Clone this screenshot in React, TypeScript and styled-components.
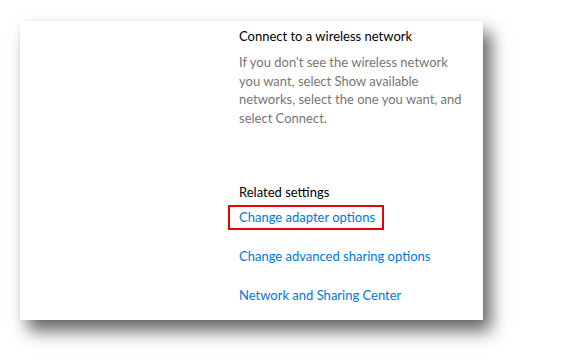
import styled, { createGlobalStyle } from "styled-components";

const GlobalStyle = createGlobalStyle`
  html, body {
    margin: 0;
    padding: 0;
    background: #ffffff;
  }
  body {
    font-family: "Lato", "Noto Sans", sans-serif;
  }
`;

const links = [
  { label: "Change adapter options", highlighted: true },
  { label: "Change advanced sharing options", highlighted: false },
  { label: "Network and Sharing Center", highlighted: false },
];

export default function App() {
  return (
    <>
      <GlobalStyle />
      <Stage>
        <Window>
          <Spacer />
          <Content>
            <Title>Connect to a wireless network</Title>
            <Description>
              If you don't see the wireless network you want, select Show
              available networks, select the one you want, and select Connect.
            </Description>
            <Related>
              <SectionLabel>Related settings</SectionLabel>
              <LinkList>
                {links.map((link) => (
                  <LinkItem key={link.label} $highlighted={link.highlighted}>
                    {link.label}
                  </LinkItem>
                ))}
              </LinkList>
            </Related>
          </Content>
        </Window>
      </Stage>
    </>
  );
}

const Stage = styled.div`
  width: 563px;
  height: 363px;
  padding: 21px 0 0 20px;
  box-sizing: border-box;
  background: #ffffff;
`;

const Window = styled.div`
  width: 463px;
  height: 299px;
  background: #ffffff;
  display: grid;
  grid-template-columns: 219px 1fr;
  box-shadow: 8px 11px 16px rgba(0, 0, 0, 0.6), 0 0 4px rgba(0, 0, 0, 0.06);
`;

const Spacer = styled.div``;

const Content = styled.div`
  display: flex;
  flex-direction: column;
  padding-top: 5px;
`;

const Title = styled.div`
  font-size: 13px;
  line-height: 20px;
  color: #000000;
`;

const Description = styled.p`
  margin: 7px 0 0;
  width: 228px;
  font-size: 13px;
  line-height: 18.5px;
  color: #767676;
`;

const Related = styled.div`
  margin-top: 55px;
  display: flex;
  flex-direction: column;
`;

const SectionLabel = styled.div`
  font-size: 13px;
  line-height: 20px;
  color: #000000;
`;

const LinkList = styled.div`
  display: flex;
  flex-direction: column;
  gap: 14px;
  margin-top: 3px;
`;

const LinkItem = styled.a<{ $highlighted: boolean }>`
  align-self: flex-start;
  font-size: 13px;
  line-height: 19px;
  color: #0078d7;
  cursor: pointer;
  margin-left: -11px;
  padding: 1px 7px 1px 9px;
  border: 2px solid ${({ $highlighted }) => ($highlighted ? "#e8000b" : "transparent")};
`;
